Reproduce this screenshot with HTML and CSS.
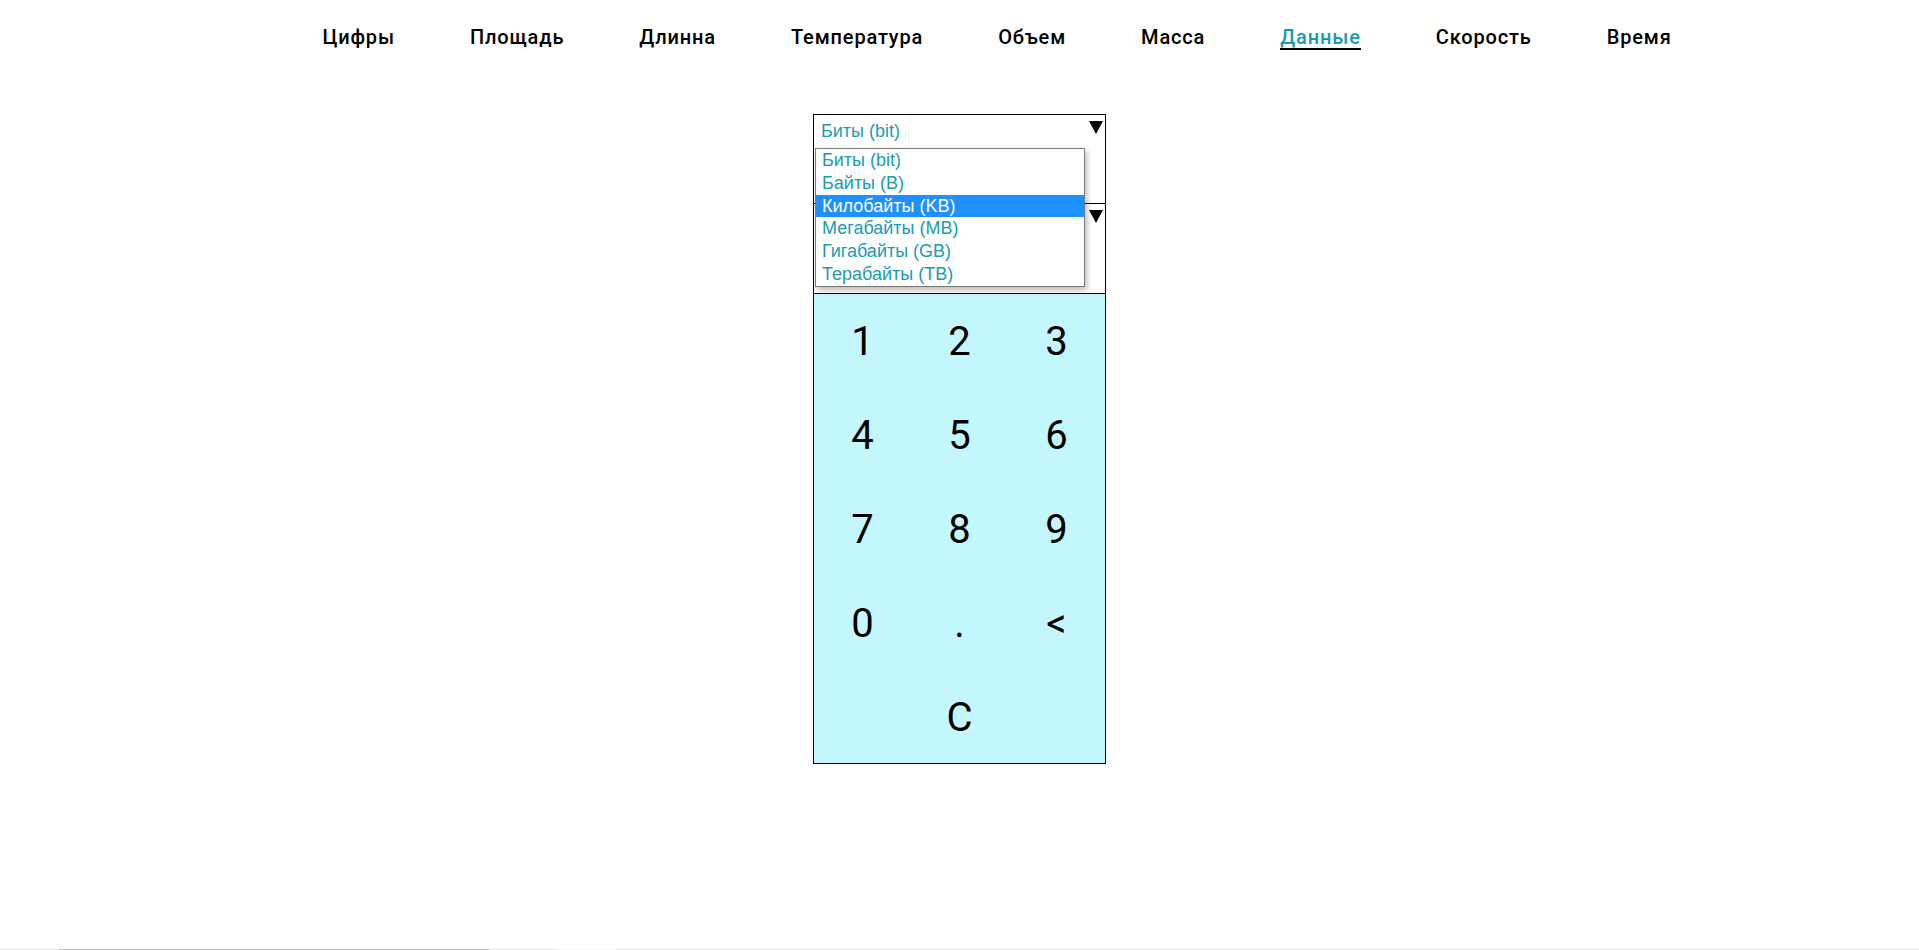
FILE: index.html
```html
<!DOCTYPE html>
<html lang="ru">
<head>
<meta charset="utf-8">
<title>Конвертер</title>
<link rel="stylesheet" href="styles.css">
</head>
<body>
<nav class="tabs">
  <a class="tab">Цифры</a>
  <a class="tab">Площадь</a>
  <a class="tab">Длинна</a>
  <a class="tab">Температура</a>
  <a class="tab">Объем</a>
  <a class="tab">Масса</a>
  <a class="tab tab-active">Данные</a>
  <a class="tab">Скорость</a>
  <a class="tab">Время</a>
</nav>
<main class="converter">
  <div class="unit-select unit-from">
    <span class="unit-value">Биты (bit)</span>
    <span class="arrow"></span>
  </div>
  <div class="unit-select unit-to">
    <span class="arrow"></span>
  </div>
  <div class="keypad">
    <button class="key">1</button>
    <button class="key">2</button>
    <button class="key">3</button>
    <button class="key">4</button>
    <button class="key">5</button>
    <button class="key">6</button>
    <button class="key">7</button>
    <button class="key">8</button>
    <button class="key">9</button>
    <button class="key">0</button>
    <button class="key">.</button>
    <button class="key">&lt;</button>
    <button class="key key-clear">C</button>
  </div>
  <ul class="dropdown">
    <li class="option">Биты (bit)</li>
    <li class="option">Байты (B)</li>
    <li class="option option-selected">Килобайты (KB)</li>
    <li class="option">Мегабайты (MB)</li>
    <li class="option">Гигабайты (GB)</li>
    <li class="option">Терабайты (TB)</li>
  </ul>
</main>
<div class="hscroll"><span class="hscroll-thumb"></span><span class="hscroll-light"></span></div>
</body>
</html>
```

FILE: styles.css
```css
html, body {
  margin: 0;
  padding: 0;
  background: #fff;
}
body {
  font-family: Roboto, "Liberation Sans", sans-serif;
  color: #000;
  height: 950px;
  overflow: hidden;
}
.tabs {
  display: flex;
  justify-content: center;
  gap: 75px;
  padding: 26px 0 0 75px;
  height: 38px;
}
.tab {
  font-size: 20px;
  font-weight: 500;
  letter-spacing: 0.85px;
  line-height: 22px;
  height: 22px;
  color: #000;
  text-decoration: none;
  border-bottom: 2px solid transparent;
  white-space: nowrap;
}
.tab-active {
  color: #1b9bb1;
  border-bottom-color: #000;
}
.converter {
  position: relative;
  width: 291px;
  margin: 50px auto 0;
  border: 1px solid #000;
  display: flex;
  flex-direction: column;
}
.unit-select {
  position: relative;
  height: 89px;
  border-bottom: 1px solid #000;
  background: #fff;
  font-family: "Liberation Sans", Arial, sans-serif;
  font-size: 18px;
  color: #1b9bb1;
  padding: 6px 7px 0;
  box-sizing: border-box;
}
.unit-to {
  height: 90px;
}
.unit-value {
  display: block;
  line-height: 21px;
}
.arrow {
  position: absolute;
  right: 2px;
  top: 6px;
  width: 0;
  height: 0;
  border-left: 7px solid transparent;
  border-right: 7px solid transparent;
  border-top: 13px solid #000;
}
.keypad {
  display: grid;
  grid-template-columns: repeat(3, 1fr);
  grid-auto-rows: 94px;
  height: 469px;
  background: #c4f6fd;
}
.key {
  border: 0;
  background: transparent;
  font-family: Roboto, sans-serif;
  font-size: 40px;
  font-weight: 400;
  color: #000;
  padding: 0;
  cursor: pointer;
}
.key-clear {
  grid-column: 2;
}
.dropdown {
  position: absolute;
  left: 1px;
  top: 33px;
  width: 268px;
  margin: 0;
  padding: 0;
  list-style: none;
  background: #fff;
  border: 1px solid #7a7a7a;
  box-shadow: 2px 3px 6px rgba(0, 0, 0, 0.28);
  font-family: "Liberation Sans", Arial, sans-serif;
  font-size: 18px;
  color: #1b9bb1;
}
.option {
  height: 22.8px;
  line-height: 22.8px;
  padding: 0 6px;
  white-space: nowrap;
}
.option-selected {
  background: #1e90ff;
  color: #fff;
}
.hscroll {
  position: fixed;
  left: 0;
  right: 0;
  bottom: 0;
  height: 1px;
  background: #e6e6e6;
  display: flex;
}
.hscroll-thumb {
  margin-left: 59px;
  width: 431px;
  background: #c2c2c2;
}
.hscroll-light {
  margin-left: 66px;
  width: 60px;
  background: #f7f7f7;
}
```
